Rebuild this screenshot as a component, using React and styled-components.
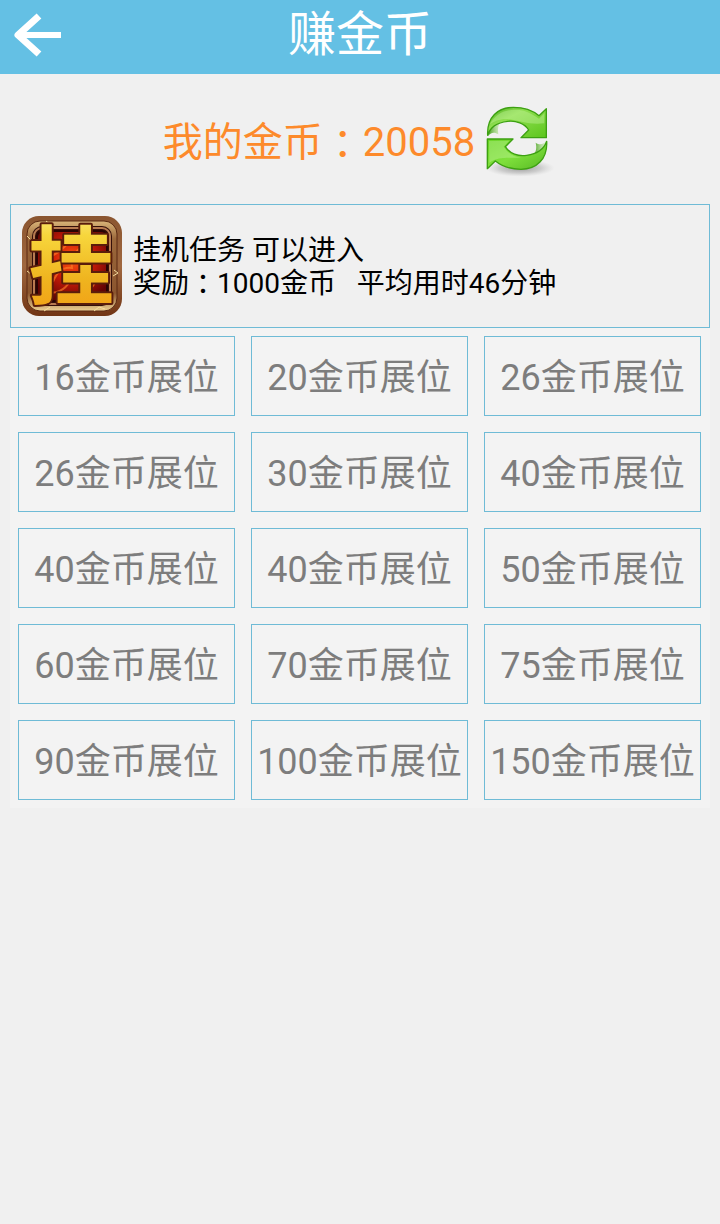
import React from "react";
import styled, { createGlobalStyle } from "styled-components";

const slots = [16, 20, 26, 26, 30, 40, 40, 40, 50, 60, 70, 75, 90, 100, 150];

const BackIcon = () => (
  <svg width="48" height="46" viewBox="0 0 48 46" fill="none" aria-hidden="true">
    <path d="M26 4L5 23L26 42" stroke="#fff" strokeWidth="7" strokeLinejoin="round" />
    <path d="M5 23H48" stroke="#fff" strokeWidth="6" />
  </svg>
);

const RefreshIcon = () => (
  <svg width="82" height="90" viewBox="0 0 246 270" aria-hidden="true">
    <defs>
      <linearGradient id="leafTop" x1="0" y1="0" x2="1" y2="1">
        <stop offset="0" stopColor="#4fae22" />
        <stop offset="0.35" stopColor="#8fdf50" />
        <stop offset="1" stopColor="#5cc51c" />
      </linearGradient>
      <linearGradient id="leafBottom" x1="0" y1="0" x2="1" y2="1">
        <stop offset="0" stopColor="#62d11c" />
        <stop offset="0.5" stopColor="#7fe03c" />
        <stop offset="1" stopColor="#57b923" />
      </linearGradient>
      <linearGradient id="fold" x1="0" y1="0" x2="1" y2="0">
        <stop offset="0" stopColor="#3f9a17" />
        <stop offset="1" stopColor="#a8e57c" stopOpacity="0.3" />
      </linearGradient>
      <radialGradient id="ground">
        <stop offset="0" stopColor="#777" stopOpacity="0.75" />
        <stop offset="0.6" stopColor="#999" stopOpacity="0.4" />
        <stop offset="1" stopColor="#bbb" stopOpacity="0" />
      </radialGradient>
    </defs>
    <ellipse cx="135" cy="222" rx="104" ry="26" fill="url(#ground)" />
    <path d="M39 126C42 97 55 83 78 82C70 92 67 104 70 121C58 112 46 116 39 126Z" fill="url(#fold)" />
    <path
      d="M38 124C35 69 69 40 115 40C149 40 174 50 192 65L214 44V131H138L161 108C150 88 122 79 98 82C64 86 45 100 38 124Z"
      fill="url(#leafTop)"
      stroke="#3da012"
      strokeWidth="4"
      strokeLinejoin="round"
    />
    <path d="M45 91C64 51 110 40 148 51C168 57 181 67 192 74L208 58V88C164 94 130 79 98 75C75 74 57 82 45 91Z" fill="#c9f4a2" opacity="0.4" />
    <path d="M214 142C210 168 198 184 174 185C183 174 186 162 182 146C194 154 206 151 214 142Z" fill="url(#fold)" />
    <path
      d="M215 142C218 196 184 226 138 226C104 226 80 216 61 201L37 224V135H114L91 158C104 179 130 188 155 184C188 180 207 166 215 142Z"
      fill="url(#leafBottom)"
      stroke="#3da012"
      strokeWidth="4"
      strokeLinejoin="round"
    />
    <path d="M42 140H103L86 158C101 180 118 190 139 191C105 193 74 185 43 206Z" fill="#c9f4a2" opacity="0.4" />
  </svg>
);

const TaskIcon = () => (
  <svg width="100" height="100" viewBox="0 0 100 100" role="img" aria-label="挂机任务">
    <defs>
      <linearGradient id="frame" x1="0" y1="0" x2="0" y2="1">
        <stop offset="0" stopColor="#8a5530" />
        <stop offset="0.5" stopColor="#a0683f" />
        <stop offset="1" stopColor="#713515" />
      </linearGradient>
      <linearGradient id="bevel" x1="0" y1="0" x2="0" y2="1">
        <stop offset="0" stopColor="#d9b478" />
        <stop offset="0.2" stopColor="#9b683b" />
        <stop offset="0.8" stopColor="#8b552e" />
        <stop offset="1" stopColor="#ecd094" />
      </linearGradient>
      <radialGradient id="lava" cx="0.5" cy="0.4" r="0.62">
        <stop offset="0" stopColor="#fb5a10" />
        <stop offset="0.45" stopColor="#cf1c08" />
        <stop offset="1" stopColor="#620404" />
      </radialGradient>
      <linearGradient id="gold" x1="0" y1="0" x2="0" y2="1">
        <stop offset="0" stopColor="#fff3a0" />
        <stop offset="0.3" stopColor="#f7d63c" />
        <stop offset="0.65" stopColor="#efb41f" />
        <stop offset="1" stopColor="#f39a13" />
      </linearGradient>
    </defs>
    <rect width="100" height="100" rx="17" fill="url(#frame)" />
    <rect x="5" y="5" width="90" height="90" rx="13" fill="url(#bevel)" stroke="#5a2912" />
    <rect x="10" y="10" width="80" height="80" rx="10" fill="#34100a" />
    <rect x="12" y="12" width="76" height="76" rx="8" fill="none" stroke="#b87b51" strokeWidth="2" />
    <rect x="15" y="15" width="70" height="70" rx="6" fill="url(#lava)" stroke="#280504" strokeWidth="2" />
    <path d="M24 43Q44 34 51 19Q51 32 62 29Q48 38 50 52Q37 50 31 66M57 81Q74 73 76 57M26 77Q44 77 49 62" fill="none" stroke="#ff8026" strokeWidth="2" opacity="0.65" />
    <path d="M24 5L29 9L27 12M92 54L96 57L91 60M5 20L10 25M5 55L9 58M72 95L77 91L83 93M22 95L28 91" fill="none" stroke="#f5dc9d" strokeWidth="1" />
    <Glyph x="49" y="82">挂</Glyph>
  </svg>
);

const App = () => {
  return (
    <Page>
      <GlobalStyle />
      <Header>
        <BackButton type="button" aria-label="返回">
          <BackIcon />
        </BackButton>
        <Title>赚金币</Title>
      </Header>
      <Balance>
        <BalanceText>
          我的金币<Colon $indent={10}>：</Colon>20058
        </BalanceText>
        <RefreshButton type="button" aria-label="刷新">
          <RefreshIcon />
        </RefreshButton>
      </Balance>
      <Content>
        <Task>
          <TaskIcon />
          <TaskInfo>
            <Line>挂机任务 可以进入</Line>
            <Line>
              奖励<Colon $indent={7}>：</Colon>1000金币{"   "}平均用时46分钟
            </Line>
          </TaskInfo>
        </Task>
        <Grid>
          {slots.map((coins, i) => (
            <Slot type="button" key={i}>
              {coins}金币展位
            </Slot>
          ))}
        </Grid>
      </Content>
    </Page>
  );
};
export default App;

const GlobalStyle = createGlobalStyle`
  * {
    box-sizing: border-box;
  }
  body {
    margin: 0;
    background: #f0f0f0;
    font-family: Roboto, "Noto Sans CJK SC", sans-serif;
  }
  button {
    margin: 0;
    padding: 0;
    border: none;
    background: none;
    font-family: inherit;
    cursor: pointer;
  }
  svg {
    display: block;
    flex-shrink: 0;
    overflow: visible;
  }
`;
const Page = styled.div`
  width: 100%;
  min-height: 100vh;
`;
const Header = styled.header`
  height: 74px;
  display: grid;
  grid-template-columns: 76px 1fr 76px;
  align-items: center;
  padding-bottom: 4px;
  background-color: #64c0e4;
  color: white;
`;
const BackButton = styled.button`
  height: 70px;
  display: flex;
  align-items: center;
  padding-left: 13px;
`;
const Title = styled.h1`
  margin: 0;
  font-size: 48px;
  font-weight: 400;
  line-height: 56px;
  text-align: center;
`;
const Balance = styled.div`
  height: 130px;
  display: flex;
  justify-content: center;
  align-items: center;
`;
const BalanceText = styled.div`
  padding-top: 8px;
  font-size: 40px;
  line-height: 48px;
  color: #fd8a2b;
  white-space: nowrap;
`;
const Colon = styled.span`
  display: inline-block;
  width: 1em;
  text-indent: ${(props) => props.$indent}px;
  white-space: nowrap;
`;
const RefreshButton = styled.button`
  display: flex;
`;
const Content = styled.main`
  margin: 0 10px;
`;
const Task = styled.section`
  display: flex;
  align-items: center;
  gap: 11px;
  padding: 11px;
  border: 1px solid #6fbbd6;
`;
const TaskInfo = styled.div`
  flex: 1;
  padding-top: 2px;
`;
const Line = styled.p`
  margin: 0;
  font-size: 28px;
  line-height: 33px;
  color: black;
  white-space: pre-wrap;
`;
const Grid = styled.div`
  display: grid;
  grid-template-columns: repeat(3, 1fr);
  gap: 16px;
  padding: 8px 9px 8px 8px;
  background-color: #f3f3f3;
`;
const Slot = styled.button`
  height: 80px;
  padding-bottom: 5px;
  border: 1px solid #6fbbd6;
  font-size: 36px;
  color: #7d7d7d;
  white-space: nowrap;
`;
const Glyph = styled.text`
  font-family: "Noto Sans CJK SC", sans-serif;
  font-size: 86px;
  font-weight: 700;
  text-anchor: middle;
  fill: url(#gold);
  stroke: #5a1d0b;
  stroke-width: 4px;
  stroke-linejoin: round;
  paint-order: stroke;
`;
